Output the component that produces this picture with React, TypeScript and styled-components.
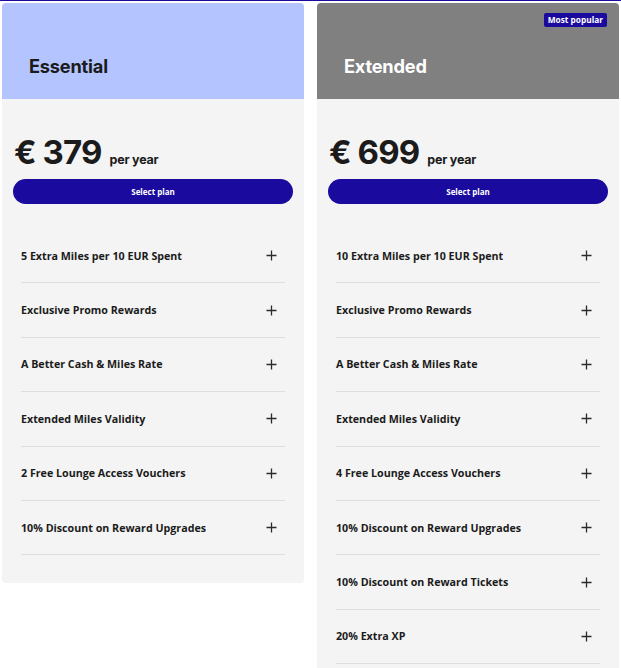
import React from "react";
import styled, { createGlobalStyle } from "styled-components";

const Global = createGlobalStyle`
  html, body { margin: 0; padding: 0; background: #ffffff; }
  * { box-sizing: border-box; }
`;

const Page = styled.div`
  border-top: 1px solid #1a0a9e;
  display: flex;
  align-items: flex-start;
  gap: 13px;
  padding: 2px 2px 0 2px;
`;

const Card = styled.div`
  width: 302px;
  border-radius: 4px;
  overflow: hidden;
  background: #f4f4f4;
`;

const Header = styled.div<{ $bg: string }>`
  position: relative;
  height: 96px;
  background: ${(p) => p.$bg};
  display: flex;
  align-items: flex-end;
  padding: 0 0 22px 27px;
`;

const Title = styled.h2<{ $light?: boolean }>`
  margin: 0;
  font-family: Inter, "Noto Sans", sans-serif;
  font-weight: 700;
  font-size: 18.2px;
  line-height: 22px;
  letter-spacing: -0.2px;
  color: ${(p) => (p.$light ? "#ffffff" : "#1b1b1b")};
`;

const Badge = styled.span`
  position: absolute;
  top: 10px;
  right: 12px;
  background: #1a0a9e;
  color: #fff;
  font-family: "Open Sans", sans-serif;
  font-weight: 700;
  font-size: 8.3px;
  line-height: 14px;
  padding: 0 4px;
  border-radius: 2px;
`;

const Body = styled.div`
  padding: 34px 11px 28px 11px;
`;

const PriceRow = styled.div`
  display: flex;
  align-items: baseline;
  gap: 8px;
  padding-left: 1px;
  color: #1b1b1b;
  font-family: Inter, "Noto Sans", sans-serif;
`;

const Amount = styled.span`
  font-size: 33px;
  font-weight: 700;
  line-height: 38px;
  letter-spacing: -0.9px;
`;

const Per = styled.span`
  font-size: 12.5px;
  font-weight: 700;
  letter-spacing: -0.2px;
`;

const Button = styled.button`
  display: block;
  width: 100%;
  height: 25px;
  margin-top: 8px;
  border: none;
  border-radius: 13px;
  background: #1a0a9e;
  color: #fff;
  font-family: "Open Sans", sans-serif;
  font-weight: 700;
  font-size: 8px;
  cursor: pointer;
`;

const List = styled.ul`
  list-style: none;
  margin: 25px 8px 0 8px;
  padding: 0;
`;

const Item = styled.li`
  height: 54.4px;
  display: flex;
  align-items: center;
  justify-content: space-between;
  border-bottom: 1px solid #dedede;
  font-family: "Open Sans", sans-serif;
  font-weight: 700;
  font-size: 10.7px;
  color: #1b1b1b;
  padding-right: 8px;
`;

const Plus = () => (
  <svg width="11" height="11" viewBox="0 0 11 11">
    <path d="M5.5 0.5v10M0.5 5.5h10" stroke="#2a2a2a" strokeWidth="1.3" fill="none" />
  </svg>
);

type Plan = {
  name: string;
  bg: string;
  light?: boolean;
  popular?: boolean;
  price: string;
  features: string[];
};

const plans: Plan[] = [
  {
    name: "Essential",
    bg: "#b3c4ff",
    price: "€ 379",
    features: [
      "5 Extra Miles per 10 EUR Spent",
      "Exclusive Promo Rewards",
      "A Better Cash & Miles Rate",
      "Extended Miles Validity",
      "2 Free Lounge Access Vouchers",
      "10% Discount on Reward Upgrades",
    ],
  },
  {
    name: "Extended",
    bg: "#808080",
    light: true,
    popular: true,
    price: "€ 699",
    features: [
      "10 Extra Miles per 10 EUR Spent",
      "Exclusive Promo Rewards",
      "A Better Cash & Miles Rate",
      "Extended Miles Validity",
      "4 Free Lounge Access Vouchers",
      "10% Discount on Reward Upgrades",
      "10% Discount on Reward Tickets",
      "20% Extra XP",
    ],
  },
];

export default function App() {
  return (
    <>
      <Global />
      <Page>
        {plans.map((p) => (
          <Card key={p.name}>
            <Header $bg={p.bg}>
              {p.popular && <Badge>Most popular</Badge>}
              <Title $light={p.light}>{p.name}</Title>
            </Header>
            <Body>
              <PriceRow>
                <Amount>{p.price}</Amount>
                <Per>per year</Per>
              </PriceRow>
              <Button>Select plan</Button>
              <List>
                {p.features.map((f) => (
                  <Item key={f}>
                    <span>{f}</span>
                    <Plus />
                  </Item>
                ))}
              </List>
            </Body>
          </Card>
        ))}
      </Page>
    </>
  );
}
